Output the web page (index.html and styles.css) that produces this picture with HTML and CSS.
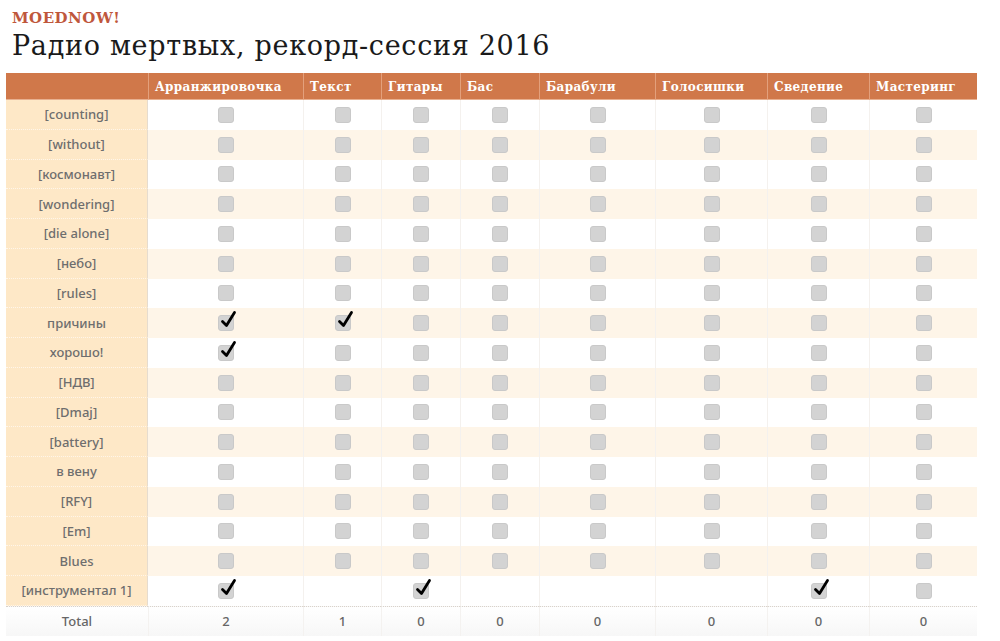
FILE: index.html
```html
<!DOCTYPE html>
<html lang="ru">
<head>
<meta charset="utf-8">
<title>Радио мертвых, рекорд-сессия 2016</title>
<link rel="stylesheet" href="styles.css">
</head>
<body>
<header class="head">
  <div class="brand">MOEDNOW!</div>
  <h1 class="title">Радио мертвых, рекорд-сессия 2016</h1>
</header>
<div class="grid" id="grid">
  <div class="th"></div>
  <div class="th">Арранжировочка</div>
  <div class="th">Текст</div>
  <div class="th">Гитары</div>
  <div class="th">Бас</div>
  <div class="th">Барабули</div>
  <div class="th">Голосишки</div>
  <div class="th">Сведение</div>
  <div class="th">Мастеринг</div>
</div>
<script src="app.js"></script>
</body>
</html>
```

FILE: styles.css
```css
* { box-sizing: border-box; }
body {
  margin: 0;
  padding: 0 0 0 6px;
  background: #fff;
  font-family: "DejaVu Serif", serif;
}
.head { padding: 9px 0 0 6px; height: 73px; }
.brand {
  font-family: "DejaVu Serif", serif;
  font-weight: bold;
  font-size: 15px;
  color: #bf573c;
  line-height: 18px;
  letter-spacing: 0.5px;
}
.title {
  margin: 2px 0 0 0;
  font-weight: normal;
  font-size: 27px;
  line-height: 33px;
  color: #1a1a1a;
  letter-spacing: 0.7px;
}
.grid {
  display: grid;
  width: 971px;
  grid-template-columns: 142px 155px 78px 79px 79px 116px 112px 102px 108px;
  grid-template-rows: 27px;
  grid-auto-rows: 29.75px;
}
.grid > .th {
  background: #d0784a;
  color: #fff;
  font-weight: bold;
  font-size: 12px;
  letter-spacing: 0.35px;
  padding: 7px 0 0 6px;
  border-left: 1px solid #e3a07c;
  border-bottom: 1px solid #e8b090;
}
.grid > .th:first-child { border-left: none; }
.lbl {
  display: flex;
  align-items: center;
  justify-content: center;
  background: #fee8c7;
  font-family: "Noto Sans", sans-serif;
  font-size: 13px;
  font-weight: 500;
  color: #6e6e6e;
  border-right: 1px solid #e6dccf;
  border-bottom: 1px dotted #fff6ea;
}
.cell {
  display: flex;
  align-items: center;
  justify-content: center;
  border-left: 1px solid #f4f1ee;
}
.cell.c1 { border-left: none; }
.alt { background: #fef5e8; }
.box {
  position: relative;
  width: 16px;
  height: 16px;
  border-radius: 3px;
  background: #d3d3d3;
  border: 1px solid #c9c9c9;
}
.check {
  position: absolute;
  left: 1px;
  top: -6px;
  width: 17px;
  height: 19px;
}
.tot {
  display: flex;
  align-items: center;
  justify-content: center;
  font-family: "Noto Sans", sans-serif;
  font-size: 13px;
  font-weight: 500;
  color: #666;
  border-top: 1px dotted #d9d2ca;
  border-left: 1px solid #f4f2f0;
  background: linear-gradient(to bottom, #ffffff, #f7f7f7);
}
.tot.first { border-left: none; }
```

FILE: app.js
```js
(function () {
  var labels = ["[counting]", "[without]", "[космонавт]", "[wondering]", "[die alone]", "[небо]", "[rules]", "причины", "хорошо!", "[НДВ]", "[Dmaj]", "[battery]", "в вену", "[RFY]", "[Em]", "Blues", "[инструментал 1]"];
  // 0 = empty box, 1 = checked, -1 = no box
  var special = {
    7: [1, 1, 0, 0, 0, 0, 0, 0],
    8: [1, 0, 0, 0, 0, 0, 0, 0],
    16: [1, -1, 1, -1, -1, -1, 1, 0]
  };
  var totals = [2, 1, 0, 0, 0, 0, 0, 0];
  var grid = document.getElementById("grid");
  var svg = '<svg class="check" viewBox="0 0 17 19"><path d="M2.5 11.5 L6.5 15.5 L14.5 2.5" fill="none" stroke="#000" stroke-width="2.8" stroke-linecap="round" stroke-linejoin="round"/></svg>';
  labels.forEach(function (l, r) {
    var alt = r % 2 === 1 ? " alt" : "";
    var d = document.createElement("div");
    d.className = "lbl";
    d.textContent = l;
    grid.appendChild(d);
    var states = special[r] || [0, 0, 0, 0, 0, 0, 0, 0];
    states.forEach(function (s, c) {
      var cell = document.createElement("div");
      cell.className = "cell" + alt + (c === 0 ? " c1" : "");
      if (s >= 0) {
        cell.innerHTML = '<span class="box">' + (s === 1 ? svg : "") + "</span>";
      }
      grid.appendChild(cell);
    });
  });
  var t = document.createElement("div");
  t.className = "tot first";
  t.textContent = "Total";
  grid.appendChild(t);
  totals.forEach(function (n) {
    var c = document.createElement("div");
    c.className = "tot";
    c.textContent = n;
    grid.appendChild(c);
  });
})();
```
